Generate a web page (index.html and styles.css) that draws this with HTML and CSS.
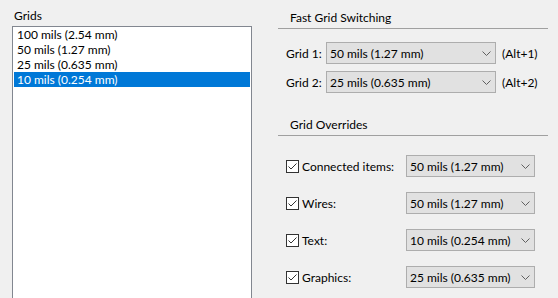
FILE: index.html
```html
<!DOCTYPE html>
<html>
<head>
<meta charset="utf-8">
<link rel="stylesheet" href="styles.css">
</head>
<body>
<div class="page">
  <section class="grids">
    <div class="grids-label">Grids</div>
    <ul class="listbox">
      <li>100 mils (2.54 mm)</li>
      <li>50 mils (1.27 mm)</li>
      <li>25 mils (0.635 mm)</li>
      <li class="selected">10 mils (0.254 mm)</li>
    </ul>
  </section>
  <section class="right">
    <div class="group-title">Fast Grid Switching</div>
    <div class="fast">
      <div class="fast-row">
        <span class="fast-label">Grid 1:</span>
        <div class="combo combo-wide"><span>50 mils (1.27 mm)</span><svg class="chev" width="9" height="5" viewBox="0 0 9 5"><path d="M0.5 0.5 L4.5 4.5 L8.5 0.5" fill="none" stroke="#606060" stroke-width="1"/></svg></div>
        <span class="hotkey">(Alt+1)</span>
      </div>
      <div class="fast-row">
        <span class="fast-label">Grid 2:</span>
        <div class="combo combo-wide"><span>25 mils (0.635 mm)</span><svg class="chev" width="9" height="5" viewBox="0 0 9 5"><path d="M0.5 0.5 L4.5 4.5 L8.5 0.5" fill="none" stroke="#606060" stroke-width="1"/></svg></div>
        <span class="hotkey">(Alt+2)</span>
      </div>
    </div>
    <div class="group-title second">Grid Overrides</div>
    <div class="overrides">
      <div class="ov-row">
        <span class="check"><svg width="13" height="13" viewBox="0 0 13 13"><rect x="0.5" y="0.5" width="12" height="12" fill="#fff" stroke="#333"/><path d="M2.5 6.5 L5 9 L10.5 3.5" fill="none" stroke="#333" stroke-width="1"/></svg></span>
        <span class="ov-label">Connected items:</span>
        <div class="combo combo-narrow"><span>50 mils (1.27 mm)</span><svg class="chev" width="9" height="5" viewBox="0 0 9 5"><path d="M0.5 0.5 L4.5 4.5 L8.5 0.5" fill="none" stroke="#606060" stroke-width="1"/></svg></div>
      </div>
      <div class="ov-row">
        <span class="check"><svg width="13" height="13" viewBox="0 0 13 13"><rect x="0.5" y="0.5" width="12" height="12" fill="#fff" stroke="#333"/><path d="M2.5 6.5 L5 9 L10.5 3.5" fill="none" stroke="#333" stroke-width="1"/></svg></span>
        <span class="ov-label">Wires:</span>
        <div class="combo combo-narrow"><span>50 mils (1.27 mm)</span><svg class="chev" width="9" height="5" viewBox="0 0 9 5"><path d="M0.5 0.5 L4.5 4.5 L8.5 0.5" fill="none" stroke="#606060" stroke-width="1"/></svg></div>
      </div>
      <div class="ov-row">
        <span class="check"><svg width="13" height="13" viewBox="0 0 13 13"><rect x="0.5" y="0.5" width="12" height="12" fill="#fff" stroke="#333"/><path d="M2.5 6.5 L5 9 L10.5 3.5" fill="none" stroke="#333" stroke-width="1"/></svg></span>
        <span class="ov-label">Text:</span>
        <div class="combo combo-narrow"><span>10 mils (0.254 mm)</span><svg class="chev" width="9" height="5" viewBox="0 0 9 5"><path d="M0.5 0.5 L4.5 4.5 L8.5 0.5" fill="none" stroke="#606060" stroke-width="1"/></svg></div>
      </div>
      <div class="ov-row">
        <span class="check"><svg width="13" height="13" viewBox="0 0 13 13"><rect x="0.5" y="0.5" width="12" height="12" fill="#fff" stroke="#333"/><path d="M2.5 6.5 L5 9 L10.5 3.5" fill="none" stroke="#333" stroke-width="1"/></svg></span>
        <span class="ov-label">Graphics:</span>
        <div class="combo combo-narrow"><span>25 mils (0.635 mm)</span><svg class="chev" width="9" height="5" viewBox="0 0 9 5"><path d="M0.5 0.5 L4.5 4.5 L8.5 0.5" fill="none" stroke="#606060" stroke-width="1"/></svg></div>
      </div>
    </div>
  </section>
</div>
</body>
</html>
```
FILE: styles.css
```css
html, body {
  margin: 0;
  padding: 0;
  overflow: hidden;
  background: #f0f0f0;
}
body {
  font-family: "Lato", "Noto Sans", sans-serif;
  font-size: 12px;
  line-height: 15px;
  color: #000;
  width: 558px;
  height: 298px;
}
.page {
  display: flex;
  padding-left: 12px;
  gap: 26px;
  height: 298px;
  box-sizing: border-box;
}
.grids {
  width: 240px;
  padding-top: 8px;
  display: flex;
  flex-direction: column;
}
.grids-label {
  height: 15px;
  padding-left: 2px;
  margin-bottom: 3px;
}
.listbox {
  list-style: none;
  margin: 0;
  padding: 0 1px;
  flex: 1;
  background: #fff;
  border: 1px solid #828790;
  border-bottom: none;
  box-sizing: border-box;
}
.listbox li {
  height: 15px;
  padding-left: 3px;
  white-space: nowrap;
}
.listbox li.selected {
  background: #0078d7;
  color: #fff;
}
.right {
  width: 270px;
  padding-top: 10px;
}
.group-title {
  padding-left: 12px;
  height: 15px;
  padding-bottom: 3px;
  border-bottom: 1px solid #a0a0a0;
}
.group-title.second {
  margin-top: 24px;
}
.fast {
  padding: 13px 0 0 8px;
  display: flex;
  flex-direction: column;
  gap: 7px;
}
.fast-row {
  display: flex;
  align-items: center;
  height: 22px;
}
.fast-label {
  width: 40px;
}
.combo {
  box-sizing: border-box;
  height: 22px;
  background: #e1e1e1;
  border: 1px solid #adadad;
  display: flex;
  align-items: center;
  justify-content: space-between;
  padding: 0 4px 0 3px;
  white-space: nowrap;
}
.combo-wide {
  width: 170px;
}
.hotkey {
  margin-left: 6px;
}
.chev {
  display: block;
  flex: none;
}
.overrides {
  padding: 19px 0 0 8px;
  display: flex;
  flex-direction: column;
  gap: 15px;
}
.ov-row {
  display: flex;
  align-items: center;
  height: 22px;
}
.check {
  width: 13px;
  height: 13px;
  display: block;
  flex: none;
}
.check svg {
  display: block;
}
.ov-label {
  margin-left: 3px;
  width: 104px;
}
.combo-narrow {
  width: 129px;
}
```
